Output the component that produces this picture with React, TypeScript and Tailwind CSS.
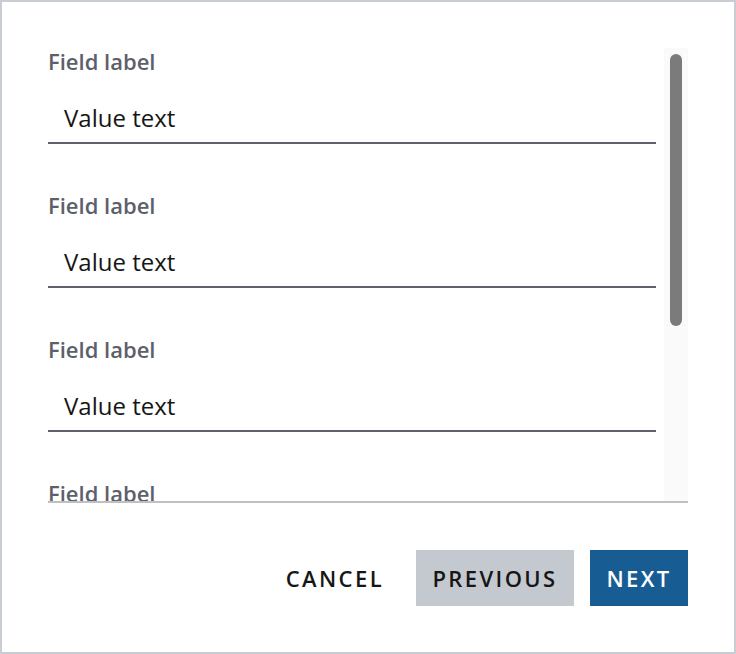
import React from "react";

function Field() {
  return (
    <div className="flex flex-col">
      <div className="text-[22px] leading-[26px] font-semibold text-[#5d606b]">Field label</div>
      <div className="mt-[28px] border-b-2 border-[#5f6170] pb-[8px] pl-[16px] text-[24px] leading-[32px] text-[#161616]">
        Value text
      </div>
    </div>
  );
}

export default function App() {
  return (
    <div
      className="w-[736px] h-[654px] border-2 border-[#c8ccd3] bg-white flex flex-col"
      style={{ fontFamily: '"Open Sans", sans-serif' }}
    >
      <div className="mt-[46px] ml-[46px] w-[640px] h-[455px] flex border-b-2 border-[#c0c0c0]">
        <div className="w-[608px] h-full overflow-hidden flex flex-col gap-[48px]">
          <Field />
          <Field />
          <Field />
          <Field />
        </div>
        <div className="ml-[8px] w-[24px] h-full bg-[#fafafa] pt-[6px] px-[6px]">
          <div className="w-[12px] h-[272px] rounded-full bg-[#7b7b7b]" />
        </div>
      </div>
      <div className="mt-[47px] mr-[46px] flex justify-end gap-[16px]">
        <button className="h-[56px] px-[16px] text-[22px] font-semibold tracking-[2.4px] text-[#161616] bg-white">
          CANCEL
        </button>
        <button className="h-[56px] w-[158px] text-[22px] font-semibold tracking-[2.4px] text-[#161616] bg-[#c4c8cf]">
          PREVIOUS
        </button>
        <button className="h-[56px] w-[98px] text-[22px] font-semibold tracking-[2.4px] text-white bg-[#175d93]">
          NEXT
        </button>
      </div>
    </div>
  );
}
